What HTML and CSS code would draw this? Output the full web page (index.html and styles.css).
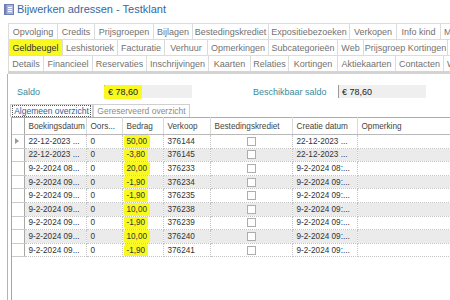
FILE: index.html
```html
<!DOCTYPE html>
<html lang="nl">
<head>
    <meta charset="UTF-8">
    <title>Bijwerken adressen - Testklant</title>
    <link rel="stylesheet" href="styles.css">
</head>
<body>
    <div class="window">
        <div class="title">
            <svg class="title-icon" width="10" height="11" viewBox="0 0 10 11">
                <rect x="0.5" y="0.5" width="9" height="10" fill="#a9b6dc" stroke="#6f7fb5"/>
                <rect x="0.5" y="0.5" width="2" height="10" fill="#6f7fb5"/>
                <line x1="4" y1="3.5" x2="8" y2="3.5" stroke="#fff"/>
                <line x1="4" y1="5.5" x2="8" y2="5.5" stroke="#fff"/>
                <line x1="4" y1="7.5" x2="8" y2="7.5" stroke="#fff"/>
            </svg>
            <span>Bijwerken adressen - Testklant</span>
        </div>

        <div class="tabs">
            <div class="tabrow row1">
                <span class="tab">Opvolging</span>
                <span class="tab">Credits</span>
                <span class="tab">Prijsgroepen</span>
                <span class="tab">Bijlagen</span>
                <span class="tab">Bestedingskrediet</span>
                <span class="tab">Expositiebezoeken</span>
                <span class="tab">Verkopen</span>
                <span class="tab">Info kind</span>
                <span class="tab left">M</span>
            </div>
            <div class="tabrow row2">
                <span class="tab current">Geldbeugel</span>
                <span class="tab">Leshistoriek</span>
                <span class="tab">Facturatie</span>
                <span class="tab">Verhuur</span>
                <span class="tab">Opmerkingen</span>
                <span class="tab">Subcategorieën</span>
                <span class="tab">Web</span>
                <span class="tab">Prijsgroep Kortingen</span>
                <span class="tab left"></span>
            </div>
            <div class="tabrow row3">
                <span class="tab">Details</span>
                <span class="tab">Financieel</span>
                <span class="tab">Reservaties</span>
                <span class="tab">Inschrijvingen</span>
                <span class="tab">Kaarten</span>
                <span class="tab">Relaties</span>
                <span class="tab">Kortingen</span>
                <span class="tab">Aktiekaarten</span>
                <span class="tab">Contacten</span>
                <span class="tab left">W</span>
            </div>
        </div>

        <div class="panel">
            <div class="saldo">
                <span class="label">Saldo</span>
                <span class="field"><span class="hl hl-field">€ 78,60</span></span>
                <span></span>
                <span class="label">Beschikbaar saldo</span>
                <span class="field">€ 78,60</span>
            </div>

            <div class="subtabs">
                <span class="subtab active"><span class="focus">Algemeen overzicht</span></span>
                <span class="subtab">Gereserveerd overzicht</span>
            </div>

            <div class="gridbox">
                <table class="grid">
                    <colgroup>
                        <col class="c-rh">
                        <col class="c-date">
                        <col class="c-oors">
                        <col class="c-bedrag">
                        <col class="c-verkoop">
                        <col class="c-krediet">
                        <col class="c-creatie">
                        <col class="c-opm">
                    </colgroup>
                    <thead>
                        <tr>
                            <th class="rh"></th>
                            <th>Boekingsdatum</th>
                            <th>Oors...</th>
                            <th>Bedrag</th>
                            <th>Verkoop</th>
                            <th>Bestedingskrediet</th>
                            <th>Creatie datum</th>
                            <th>Opmerking</th>
                        </tr>
                    </thead>
                    <tbody>
                        <tr>
                            <td class="rh"><span class="arrow"></span></td>
                            <td>22-12-2023 ...</td><td>0</td>
                            <td><span class="hl">50,00</span></td>
                            <td>376144</td><td class="chk"><span class="cb"></span></td>
                            <td>22-12-2023 ...</td><td></td>
                        </tr>
                        <tr>
                            <td class="rh"></td>
                            <td>22-12-2023 ...</td><td>0</td>
                            <td><span class="hl">-3,80</span></td>
                            <td>376145</td><td class="chk"><span class="cb"></span></td>
                            <td>22-12-2023 ...</td><td></td>
                        </tr>
                        <tr>
                            <td class="rh"></td>
                            <td>9-2-2024 08...</td><td>0</td>
                            <td><span class="hl">20,00</span></td>
                            <td>376233</td><td class="chk"><span class="cb"></span></td>
                            <td>9-2-2024 08:...</td><td></td>
                        </tr>
                        <tr>
                            <td class="rh"></td>
                            <td>9-2-2024 09...</td><td>0</td>
                            <td><span class="hl">-1,90</span></td>
                            <td>376234</td><td class="chk"><span class="cb"></span></td>
                            <td>9-2-2024 09:...</td><td></td>
                        </tr>
                        <tr>
                            <td class="rh"></td>
                            <td>9-2-2024 09...</td><td>0</td>
                            <td><span class="hl">-1,90</span></td>
                            <td>376235</td><td class="chk"><span class="cb"></span></td>
                            <td>9-2-2024 09:...</td><td></td>
                        </tr>
                        <tr>
                            <td class="rh"></td>
                            <td>9-2-2024 09...</td><td>0</td>
                            <td><span class="hl">10,00</span></td>
                            <td>376238</td><td class="chk"><span class="cb"></span></td>
                            <td>9-2-2024 09:...</td><td></td>
                        </tr>
                        <tr>
                            <td class="rh"></td>
                            <td>9-2-2024 09...</td><td>0</td>
                            <td><span class="hl">-1,90</span></td>
                            <td>376239</td><td class="chk"><span class="cb"></span></td>
                            <td>9-2-2024 09:...</td><td></td>
                        </tr>
                        <tr>
                            <td class="rh"></td>
                            <td>9-2-2024 09...</td><td>0</td>
                            <td><span class="hl">10,00</span></td>
                            <td>376240</td><td class="chk"><span class="cb"></span></td>
                            <td>9-2-2024 09:...</td><td></td>
                        </tr>
                        <tr>
                            <td class="rh"></td>
                            <td>9-2-2024 09...</td><td>0</td>
                            <td><span class="hl">-1,90</span></td>
                            <td>376241</td><td class="chk"><span class="cb"></span></td>
                            <td>9-2-2024 09:...</td><td></td>
                        </tr>
                    </tbody>
                </table>
            </div>
        </div>
    </div>
</body>
</html>
```

FILE: styles.css
```css
html, body {
    margin: 0;
    padding: 0;
    background: #fff;
}
body {
    font-family: "Liberation Sans", Arial, sans-serif;
    font-size: 9px;
    color: #333;
}
.window {
    width: 450px;
    height: 300px;
    overflow: hidden;
    display: flex;
    flex-direction: column;
}

/* title bar */
.title {
    height: 18px;
    display: flex;
    align-items: center;
    gap: 3px;
    padding-left: 4px;
    font-size: 11px;
    color: #3568a0;
}
.title-icon {
    flex: none;
}

/* tab rows */
.tabs {
    margin: 5px 0 0 8px;
    width: 442px;
    border-bottom: 3px solid #d4d4d4;
}
.tabrow {
    display: grid;
    height: 16px;
    box-sizing: border-box;
    border-top: 1px solid #dcdcdc;
}
.row1 { grid-template-columns: 49px 37px 59px 39px 76px 81px 47px 44px 1fr; }
.row2 { grid-template-columns: 54px 55px 47px 43px 61px 69px 26px 84px 1fr; }
.row3 { grid-template-columns: 35px 49px 54px 62px 42px 38px 49px 58px 48px 1fr; }
.tab {
    display: flex;
    align-items: center;
    justify-content: center;
    border-left: 1px solid #dcdcdc;
    color: #727272;
    white-space: nowrap;
    overflow: hidden;
}
.tab.left {
    justify-content: flex-start;
    padding-left: 3px;
}
.tab.current {
    color: #333;
    background: #f9f920;
}

/* content panel */
.panel {
    flex: 1;
    margin-left: 7px;
    border-left: 1px solid #b4b4b4;
    display: flex;
    flex-direction: column;
}
.saldo {
    display: grid;
    grid-template-columns: 87px 88px 61px 85px 88px;
    align-items: center;
    height: 13px;
    margin: 11px 0 0 9px;
}
.label {
    color: #3a8b9c;
}
.field {
    height: 13px;
    box-sizing: border-box;
    background: #efefef;
    border-left: 1px solid #9a9a9a;
    padding-left: 3px;
    display: flex;
    align-items: center;
    color: #222;
}
.hl {
    background: #f9f920;
    border-radius: 2px;
    padding: 2px 3px;
    margin-left: -3px;
}
.hl-field {
    padding: 2px 4px;
    margin-left: -4px;
}

/* sub tabs */
.subtabs {
    display: flex;
    height: 13px;
    margin: 6px 0 0 2px;
    font-size: 8.5px;
}
.subtab {
    box-sizing: border-box;
    width: 97px;
    display: flex;
    align-items: center;
    justify-content: center;
    border: 1px solid #d0d0d0;
    border-bottom: none;
    color: #8c8c8c;
    white-space: nowrap;
}
.subtab.active {
    width: 83px;
    color: #2d5f9a;
}
.focus {
    border: 1px dotted #555;
    padding: 0 1px;
    line-height: 10px;
}

/* data grid */
.gridbox {
    flex: 1;
    margin-left: 3px;
    border-left: 1px solid #a4a4a4;
}
.grid {
    border-collapse: collapse;
    table-layout: fixed;
    width: 480px;
    border-top: 1px solid #ababab;
    font-size: 8.2px;
}
.c-rh { width: 12px; }
.c-date { width: 62px; }
.c-oors { width: 36px; }
.c-bedrag { width: 41px; }
.c-verkoop { width: 47px; }
.c-krediet { width: 82px; }
.c-creatie { width: 65px; }
.c-opm { width: 135px; }
.grid thead tr {
    height: 17px;
}
.grid th {
    font-weight: normal;
    text-align: left;
    padding: 0 0 0 4px;
    color: #444;
    border-right: 1px solid #dadada;
    border-bottom: 1px solid #b8b8b8;
    white-space: nowrap;
    overflow: hidden;
}
.grid tbody tr {
    height: 13.6px;
}
.grid td {
    padding: 0 0 0 4px;
    border-right: 1px dotted #c4c4c4;
    border-bottom: 1px dotted #c4c4c4;
    white-space: nowrap;
    overflow: hidden;
    color: #333;
}
.grid tbody tr:nth-child(even) td {
    background: #ebebeb;
}
.grid .rh,
.grid tbody tr:nth-child(even) td.rh {
    padding: 0;
    background: #fff;
    border-right: 1px solid #a8a8a8;
    border-bottom: 1px solid #cacaca;
}
.grid td.chk {
    padding: 0;
}
.cb {
    display: block;
    width: 9px;
    height: 9px;
    margin: 0 auto;
    box-sizing: border-box;
    border: 1px solid #adadad;
    background: #fff;
}
.arrow {
    display: block;
    width: 0;
    height: 0;
    margin-left: 3px;
    border-left: 4px solid #9a9a9a;
    border-top: 3px solid transparent;
    border-bottom: 3px solid transparent;
}
```
